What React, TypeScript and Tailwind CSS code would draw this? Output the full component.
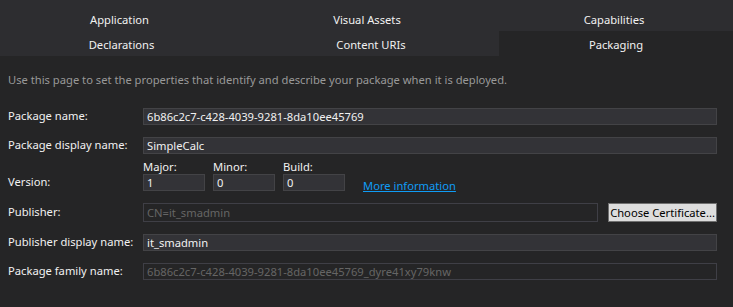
import React from "react";

const font = { fontFamily: '"Noto Sans", "Open Sans", sans-serif' };

function Field({ value, disabled }: { value: string; disabled?: boolean }) {
  return (
    <div
      className={
        "flex h-[17px] flex-1 items-center border pl-[3px] text-[11.2px] leading-none " +
        (disabled
          ? "border-[#3f3f46] bg-transparent text-[#656565]"
          : "border-[#434346] bg-[#333337] text-[#f1f1f1]")
      }
    >
      {value}
    </div>
  );
}

function Row({ label, children, h = "h-[17px]" }: { label: string; children: React.ReactNode; h?: string }) {
  return (
    <div className={"flex items-stretch " + h}>
      <div className="flex w-[135px] shrink-0 items-center text-[11.2px] text-[#f1f1f1]">{label}</div>
      <div className="flex flex-1 items-stretch">{children}</div>
    </div>
  );
}

function VerBox({ label, value }: { label: string; value: string }) {
  return (
    <div className="flex w-[62px] flex-col">
      <div className="h-[14px] text-[11.2px] leading-[14px] text-[#f1f1f1]">{label}</div>
      <div className="flex h-[17px] items-center border border-[#434346] bg-[#333337] pl-[3px] text-[11.2px] leading-none text-[#f1f1f1]">
        {value}
      </div>
    </div>
  );
}

export default function App() {
  return (
    <div className="h-[307px] w-[733px] overflow-hidden bg-[#252526]" style={font}>
      <div className="h-[56px] bg-[#2d2d30] pt-[6px] text-[11.2px] text-[#f1f1f1]">
        <div className="flex h-[25px]">
          <div className="flex w-[239px] items-center justify-center pt-[4px]">Application</div>
          <div className="flex w-[256px] items-center justify-center pt-[4px]">Visual Assets</div>
          <div className="flex flex-1 items-center justify-center pt-[4px]">Capabilities</div>
        </div>
        <div className="flex h-[25px]">
          <div className="flex w-[243px] items-center justify-center pt-[4px]">Declarations</div>
          <div className="flex w-[256px] items-center justify-center pt-[4px]">Content URIs</div>
          <div className="flex flex-1 items-center justify-center bg-[#252526] pt-[4px]">Packaging</div>
        </div>
      </div>
      <div className="pl-[8px] pr-[16px]">
        <div className="mt-[16px] h-[16px] text-[11.2px] leading-[16px] text-[#999999]">
          Use this page to set the properties that identify and describe your package when it is deployed.
        </div>
        <div className="mt-[20px] flex flex-col">
          <Row label="Package name:">
            <Field value="6b86c2c7-c428-4039-9281-8da10ee45769" />
          </Row>
          <div className="mt-[12px]">
            <Row label="Package display name:">
              <Field value="SimpleCalc" />
            </Row>
          </div>
          <div className="mt-[6px] flex items-end">
            <div className="flex h-[17px] w-[135px] shrink-0 items-center text-[11.2px] text-[#f1f1f1]">Version:</div>
            <div className="flex items-end gap-[8px]">
              <VerBox label="Major:" value="1" />
              <VerBox label="Minor:" value="0" />
              <VerBox label="Build:" value="0" />
            </div>
            <a
              href="#"
              className="mb-[-3px] ml-[18px] h-[16px] text-[11.2px] leading-[16px] text-[#0f9cf5] underline"
            >
              More information
            </a>
          </div>
          <div className="mt-[12px]">
            <Row label="Publisher:" h="h-[19px]">
              <div className="flex flex-1 items-center border border-[#3f3f46] pl-[3px] text-[11.2px] leading-none text-[#656565]">
                CN=it_smadmin
              </div>
              <button className="ml-[10px] w-[109px] whitespace-nowrap border border-[#707070] bg-[#dddddd] px-0 text-[11.2px] leading-none text-black">
                Choose Certificate...
              </button>
            </Row>
          </div>
          <div className="mt-[12px]">
            <Row label="Publisher display name:">
              <Field value="it_smadmin" />
            </Row>
          </div>
          <div className="mt-[12px]">
            <Row label="Package family name:">
              <Field value="6b86c2c7-c428-4039-9281-8da10ee45769_dyre41xy79knw" disabled />
            </Row>
          </div>
        </div>
      </div>
    </div>
  );
}
